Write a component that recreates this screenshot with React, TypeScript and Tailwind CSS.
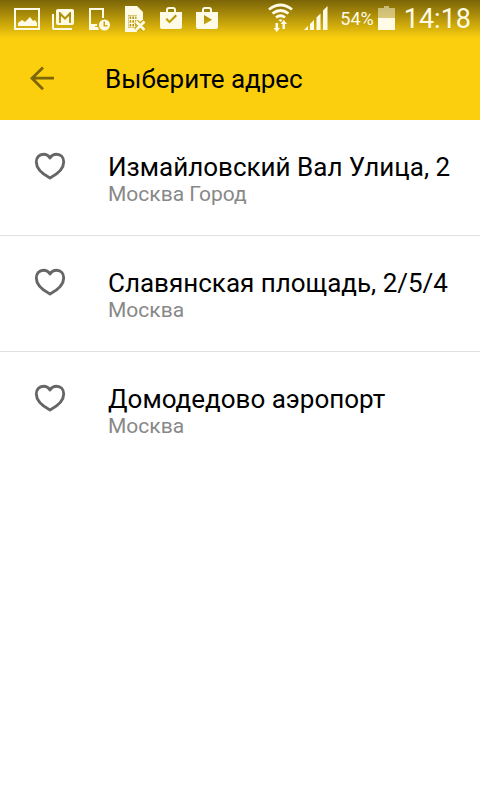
import type { ReactNode } from "react";

const addresses = [
  { title: "Измайловский Вал Улица, 2", city: "Москва Город" },
  { title: "Славянская площадь, 2/5/4", city: "Москва" },
  { title: "Домодедово аэропорт", city: "Москва" },
];

function StatusIcon({ children }: { children: ReactNode }) {
  return (
    <svg className="h-7 w-7 shrink-0 overflow-visible" viewBox="0 0 28 28" fill="#fffbe6" aria-hidden="true">
      {children}
    </svg>
  );
}

function StatusBar() {
  return (
    <div className="flex h-[38px] items-center justify-between bg-linear-to-b from-[#7b6507] to-[#fbcf0d] pr-[9px] pl-[13px] text-[#fffbe6]">
      <div className="flex items-center gap-2">
        <StatusIcon>
          <path fillRule="evenodd" d="M1 3h26v22H1zM3 5v18h22V5z" />
          <path d="M5 21v-3l4-3 3 2 5-5 3 4 2-1 2 3v3z" />
        </StatusIcon>
        <StatusIcon>
          <path d="M3 9h2v14h18v2H5q-2 0-2-2z" />
          <path fillRule="evenodd" d="M9 4h14q2 0 2 2v12q0 2-2 2H9q-2 0-2-2V6q0-2 2-2zM10 7v11h2v-7l4 4 4-4v7h2V7h-1l-5 5-5-5z" />
        </StatusIcon>
        <StatusIcon>
          <path d="M4 3h15v10h-2V5H6v14h6v2h-2v1h3l1 3H4z" />
          <path fillRule="evenodd" d="M19.500 14.500a5.500 5.500 0 1 1 0 11 5.500 5.500 0 0 1 0-11zM18.500 16.500v5h4V20H20v-3.500z" />
        </StatusIcon>
        <StatusIcon>
          <path d="M4 1h12l6 6v8l-3 2-3-2v-5H7v13h9v4H4z" />
          <path d="M7 10.500h9v12H7z" fill="#b4940a" />
          <path d="M8 11h8v11H8zM10.800 11v11M13.600 11v11M8 14.700h8M8 18.300h8" fill="none" stroke="#fffbe6" strokeWidth="1.200" />
          <path d="m15 16.500 8.500 8.500m0-8.500L15 25" stroke="#c9a50b" strokeWidth="5" />
          <path d="m15 16.500 8.500 8.500m0-8.500L15 25" stroke="#fffbe6" strokeWidth="2.800" />
        </StatusIcon>
        <StatusIcon>
          <path fillRule="evenodd" d="M3 7h6V5q0-3 3-3h4q3 0 3 3v2h6v15q0 2-2 2H5q-2 0-2-2zM11 7h6V5q0-1-1-1h-4q-1 0-1 1zM10 13l-1.500 1.500 4 4L20 11l-1.500-1.500-6 6z" />
        </StatusIcon>
        <StatusIcon>
          <path fillRule="evenodd" d="M3 7h6V5q0-3 3-3h4q3 0 3 3v2h6v15q0 2-2 2H5q-2 0-2-2zM11 7h6V5q0-1-1-1h-4q-1 0-1 1zM11 10v9.500l8-4.700z" />
        </StatusIcon>
      </div>
      <div className="flex items-center">
        <StatusIcon>
          <g fill="none" stroke="#fffbe6" strokeWidth="2.800">
            <path d="M1 4.500q11.500-9 23 0M4.500 8.500q8-6 16 0M8 12.500q4.500-3.500 9 0" />
          </g>
          <path d="M10.500 15q2-1.500 4 0l-2 2z" />
          <path d="M7.500 18h2.600v5H12l-3.200 4-3.300-4h2zM14.500 24v-5h-2l3.300-4 3.200 4h-2v5z" />
        </StatusIcon>
        <svg className="ml-2 h-7 w-6" viewBox="0 0 24 28" fill="#fffbe6" aria-hidden="true">
          <path d="M0 25l4-4v4zM6 19l4-4v10H6zM12.500 12.500l4-4V25h-4zM19 5.500l4.500-4.500v24H19z" />
        </svg>
        <span className="ml-3 text-lg leading-7">54%</span>
        <svg className="ml-1 h-7 w-[17px]" viewBox="0 0 17 28" fill="#fffbe6" aria-hidden="true">
          <path opacity=".5" d="M6 1h5v2h6v10H0V3h6z" />
          <path d="M0 13h17v12H0z" />
        </svg>
        <time className="ml-[9px] text-[27px] leading-7">14:18</time>
      </div>
    </div>
  );
}

function HeartIcon() {
  return (
    <svg className="h-7 w-8" viewBox="0 0 32 28" fill="none" stroke="#666" strokeWidth="2.900" strokeLinejoin="round" aria-hidden="true">
      <path d="M16 6C14.500 3.300 12 2.200 9.500 2.200 5 2.200 2.300 5.500 2.300 10c0 6.500 6 12 13.700 16C23.700 22 29.700 16.500 29.700 10c0-4.500-2.700-7.800-7.200-7.800-2.500 0-5 1.100-6.500 3.800z" />
    </svg>
  );
}

export default function App() {
  return (
    <div className="min-h-screen bg-white font-[Roboto,sans-serif] text-black">
      <header className="bg-[#fbcf0d]">
        <StatusBar />
        <div className="flex h-[82px] items-center pl-[26px]">
          <button type="button" aria-label="Назад" className="flex h-8 w-8 items-center justify-center">
            <svg className="h-7 w-7" viewBox="0 0 28 28" fill="none" stroke="#7d6606" strokeWidth="2.800" aria-hidden="true">
              <path d="M15 2.500 4 13.200l11 11M4 13.200h22" />
            </svg>
          </button>
          <h1 className="ml-[47px] text-[26px] leading-8">Выберите адрес</h1>
        </div>
      </header>
      <main>
        <ul>
          {addresses.map(({ title, city }) => (
            <li key={title} className="flex h-[116px] items-start border-b border-[#e0e0e0] pt-8 pl-[34px] last:border-b-0">
              <button type="button" aria-label="В избранное" className="shrink-0">
                <HeartIcon />
              </button>
              <div className="ml-[42px] min-w-0">
                <h2 className="text-[26px] leading-[30px]">{title}</h2>
                <p className="text-[21px] leading-6 text-[#888]">{city}</p>
              </div>
            </li>
          ))}
        </ul>
      </main>
    </div>
  );
}
